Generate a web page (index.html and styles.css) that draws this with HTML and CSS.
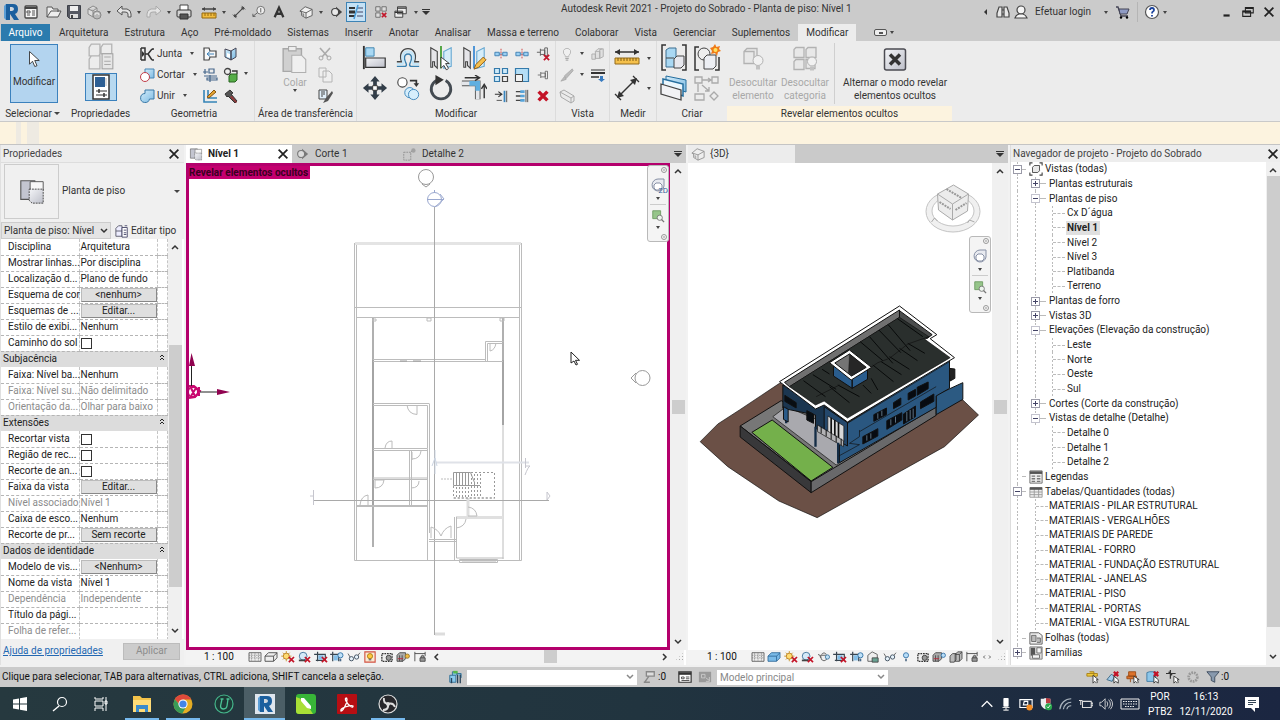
FILE: index.html
```html
<!DOCTYPE html>
<html lang="pt-BR">
<head>
<meta charset="utf-8">
<title>Autodesk Revit 2021 - Projeto do Sobrado</title>
<link rel="stylesheet" href="styles.css">
</head>
<body>
<svg class="defs" aria-hidden="true">
<defs>
<linearGradient id="gBlue" x1="0" y1="0" x2="1" y2="1"><stop offset="0" stop-color="#d3ecfa"/><stop offset="1" stop-color="#7dbbe3"/></linearGradient>
<linearGradient id="gGrey" x1="0" y1="0" x2="1" y2="1"><stop offset="0" stop-color="#f4f5f8"/><stop offset="1" stop-color="#bdbfc9"/></linearGradient>
</defs>
<symbol id="revit" viewBox="0 0 16 20"><path d="M3 2h7q5 0 5 5 0 4-3 5l4 6h-5l-4-6v6H3z" fill="#1b5f9e"/><path d="M7 5v4h2q2-.4 2-2T9 5z" fill="#cfd6de"/><path d="M3 2v16l-2-2V4z" fill="#5b9ed6"/></symbol>
<symbol id="home" viewBox="0 0 16 16"><rect x="2" y="2" width="12" height="12" rx="1" fill="#f5f5f5" stroke="#444" stroke-width="1.300"/><path d="M2 4h12" stroke="#444" stroke-width="2"/><path d="M4 7h3v2H4zM4 11h3M9 7h3M9 9h3M9 11h3" stroke="#555" fill="none"/></symbol>
<symbol id="open" viewBox="0 0 16 16"><path d="M1 13V3h5l1 2h5v3M1 13l4-6h10l-3 6z" fill="#eee" stroke="#555"/></symbol>
<symbol id="save" viewBox="0 0 16 16"><path d="M1.500 1.500h13v13h-11l-2-2z" fill="#555862" stroke="#3d4048"/><path d="M4 2h8v5H4z" fill="#eee"/><path d="M4 10h8v4H4z" fill="#ddd"/><path d="M6 11v3" stroke="#444" stroke-width="2"/></symbol>
<symbol id="cloud" viewBox="0 0 16 16"><path d="M2 5l5-3 4 2v6l-4 3-5-3zM2 5l5 2 4-3M7 7v6" fill="#ddd" stroke="#8b8b8b"/><circle cx="11" cy="11" r="4" fill="#b9b9b9" stroke="#888"/><path d="M9 11a2 2 0 0 1 4 0" fill="none" stroke="#eee"/></symbol>
<symbol id="undo" viewBox="0 0 16 16"><path d="M1 7l5-5v3h5q4 1 4 5v3h-3v-3q0-2-3-2H6v3z" fill="#e4e4e4" stroke="currentColor"/></symbol>
<symbol id="print" viewBox="0 0 16 16"><path d="M4 7V1h8v6" fill="#fff" stroke="#444"/><rect x="1" y="6" width="14" height="7" rx="1" fill="#d4d4d4" stroke="#333"/><path d="M4 10h8v5H4z" fill="#555" stroke="#333"/></symbol>
<symbol id="meas" viewBox="0 0 16 16"><path d="M1 5h14" stroke="#444" stroke-width="1.500"/><path d="M1 5l3-2v4zM15 5l-3-2v4z" fill="#444"/><path d="M1 9h14v5H1z" fill="#f2bd3f" stroke="#94690e"/><path d="M4 9v3M7 9v3M10 9v3M13 9v3" stroke="#94690e"/></symbol>
<symbol id="dim" viewBox="0 0 16 16"><path d="M3 13L13 3" stroke="#444" stroke-width="1.300"/><path d="M1 11l4 4M11 1l4 4" stroke="#444"/><path d="M2 14l1-4 3 3zM14 2l-1 4-3-3z" fill="#444"/></symbol>
<symbol id="tag" viewBox="0 0 16 16"><circle cx="10" cy="6" r="4.500" fill="#eee" stroke="#666"/><path d="M10 3.500v5M6 9l-5 4M1 10v3h3" fill="none" stroke="#555"/></symbol>
<symbol id="letra" viewBox="0 0 16 16"><path d="M3 14L8 3l5 11M5 10h6" fill="none" stroke="#333" stroke-width="2.600"/></symbol>
<symbol id="house" viewBox="0 0 16 16"><path d="M1 7l6-5 8 3v7l-7 3-5-3V8z" fill="#f0f0f0" stroke="#555"/><path d="M2 7l6 2 7-4M8 9v6" fill="none" stroke="#555"/><path d="M4 9l2 1v3l-2-1z" fill="#888"/></symbol>
<symbol id="sect" viewBox="0 0 16 16"><path d="M8 2l7 6-7 6z" fill="#444"/><circle cx="7" cy="8" r="4" fill="#e9e9e9" stroke="#444" stroke-width="1.300"/></symbol>
<symbol id="thin" viewBox="0 0 16 16"><path d="M1 4h6M1 12h6" stroke="#333" stroke-width="2"/><path d="M1 8h6" stroke="#333" stroke-width="3"/><path d="M9 4h6M9 8h6M9 12h6" stroke="#446"/><path d="M10 1L6 15" stroke="#479ad6" stroke-width="1.500"/></symbol>
<symbol id="closeh" viewBox="0 0 16 16"><path d="M2 2h5v5H2zM9 2h5v5H9zM2 9h5v5H2z" fill="#ddd" stroke="#666"/><path d="M9 9l5 5M14 9l-5 5" stroke="#c2172b" stroke-width="2"/></symbol>
<symbol id="sww" viewBox="0 0 16 16"><path d="M4 2h10v8H4zM1 7h9v7H1z" fill="#eee" stroke="#333"/><path d="M4 3.500h10M1 8.500h9" stroke="#333" stroke-width="1.500"/></symbol>
<symbol id="bino" viewBox="0 0 16 16"><path d="M2 13V9l2-6h3v10zM14 13V9l-2-6H9v10zM7 6h2v4H7z" fill="#e8e8e8" stroke="#444" stroke-width="1.200"/></symbol>
<symbol id="user" viewBox="0 0 16 16"><circle cx="8" cy="6" r="4" fill="#f5f5f5" stroke="#444" stroke-width="1.200"/><path d="M2 14q1-3 4-4h4q3 1 4 4z" fill="#f5f5f5" stroke="#444" stroke-width="1.200"/></symbol>
<symbol id="cart" viewBox="0 0 16 16"><path d="M1 3h2l3 9h7" fill="none" stroke="#445" stroke-width="1.300"/><path d="M4 5h10l-2 5H5z" fill="#8f9bc4" stroke="#445"/><circle cx="6" cy="13.500" r="1.200"/><circle cx="12" cy="13.500" r="1.200"/></symbol>
<symbol id="help" viewBox="0 0 16 16"><circle cx="8" cy="8" r="6.500" fill="#fff" stroke="#555" stroke-width="1.200"/><path d="M6 6q0-2 2-2t2 2q0 1-1 1.500-1 .5-1 2M8 11v1.500" fill="none" stroke="#1c449e" stroke-width="1.800"/></symbol>
<symbol id="x" viewBox="0 0 16 16"><path d="M3 3l10 10M13 3L3 13" stroke="currentColor" stroke-width="2"/></symbol>
<symbol id="min" viewBox="0 0 16 16"><path d="M4 12h7" stroke="#222" stroke-width="2.500"/></symbol>
<symbol id="rest" viewBox="0 0 16 16"><path d="M5 3h9v6H5zM2 7h9v6H2z" fill="#ccc" stroke="#222" stroke-width="1.200"/><path d="M5 3.500h9M2 7.500h9" stroke="#222" stroke-width="2"/></symbol>
<symbol id="cursor" viewBox="0 0 16 22"><path d="M2 1v17l4-4 3 7 3-1-3-7h6z" fill="#fff" stroke="#333" stroke-width="1.200"/></symbol>
<symbol id="types" viewBox="0 0 26 26"><path d="M2 4l2-3h8v9l-1 2H2zM13 4l2-3h8v9H13zM2 15l2-3h8v12H2z" fill="#ececec" stroke="#b4b4b4" stroke-width="1.200"/><rect x="14" y="10" width="10" height="14" fill="#e6e6e6" stroke="#a4a4a4"/><path d="M16 13h6M16 17h6M16 20h6" stroke="#aaa"/></symbol>
<symbol id="props" viewBox="0 0 24 26"><rect x="4" y="1" width="16" height="24" fill="#fff" stroke="#333" stroke-width="1.500"/><rect x="6" y="3" width="10" height="10" fill="#2d5f94"/><path d="M17 4v8" stroke="#bbb"/><path d="M7 17h11M7 21h11" stroke="#333"/><path d="M10 15v4M15 19v4" stroke="#333" stroke-width="1.500"/></symbol>
<symbol id="cope" viewBox="0 0 16 16"><path d="M2 2h4v12H2M2 2v12M6 8h3l4-5M9 8l4 6M13 3h2M13 14h2" fill="none" stroke="#333" stroke-width="1.500"/><path d="M3 5l2 2v2l-2 2z" fill="#333"/></symbol>
<symbol id="cut" viewBox="0 0 16 16"><path d="M6 2h9v9H6z" fill="url(#gBlue)" stroke="#4887b5"/><circle cx="6" cy="10" r="4.500" fill="#fff" stroke="#c03d49"/></symbol>
<symbol id="join" viewBox="0 0 16 16"><path d="M6 2h9v9h-4.500A4.500 4.500 0 1 1 6 5.500z" fill="url(#gBlue)" stroke="#3878a6"/></symbol>
<symbol id="g1" viewBox="0 0 16 16"><path d="M2 14V2h5l1 3 6 0v6H8l-1 3z" fill="#f8f8f8" stroke="#444" stroke-width="1.200"/><path d="M12 8H5M8 5.500L5 8l3 2.500" stroke="#3e82b9" fill="none"/></symbol>
<symbol id="g2" viewBox="0 0 16 16"><path d="M2 3l6 2v9l-6-3zM8 5l5-3v9l-5 3z" fill="url(#gBlue)" stroke="#445"/><path d="M4 7l3 1v4l-3-1z" fill="#fff"/></symbol>
<symbol id="g3" viewBox="0 0 16 16"><path d="M1 5h5M3 2v5M7 2h5v4H7zM2 9h13M5 11h10v2H5zM8 8v7" fill="none" stroke="#46678b" stroke-width="1.200"/></symbol>
<symbol id="g4" viewBox="0 0 16 16"><circle cx="4.500" cy="4.500" r="3" fill="#eee" stroke="#444" stroke-width="1.300"/><path d="M9 4h5v3" fill="none" stroke="#333" stroke-width="1.300"/><path d="M6 9l2-2h6v6l-2 2H6z" fill="#56ad48" stroke="#286421"/></symbol>
<symbol id="g5" viewBox="0 0 16 16"><path d="M2 2v12h13M6 2v8h9" fill="none" stroke="#3484b7" stroke-width="1.600"/><path d="M5 9l7-7 2 2-7 6z" fill="#e2a332" stroke="#875613"/></symbol>
<symbol id="hammer" viewBox="0 0 16 16"><path d="M2 6l5-4 3 3-2 1 6 7-2 2-7-7-1 1z" fill="#555" stroke="#333"/><path d="M9 8l5 6-1 1-6-6z" fill="#96393a"/></symbol>
<symbol id="paste" viewBox="0 0 26 28"><path d="M2 4h17v21H2z" fill="#d0d0d0" stroke="#a8a8a8" stroke-width="1.300"/><path d="M7 2h7v4H7z" fill="#eee" stroke="#a8a8a8"/><path d="M10 10h9l4 4v12H10z" fill="#f0f0f0" stroke="#b0b0b0"/></symbol>
<symbol id="sciss" viewBox="0 0 16 16"><path d="M3 2l8 9M13 2L5 11" stroke="#aaa" stroke-width="1.600"/><circle cx="4" cy="12" r="2" fill="none" stroke="#aaa"/><circle cx="12" cy="12" r="2" fill="none" stroke="#aaa"/></symbol>
<symbol id="copyc" viewBox="0 0 16 16"><path d="M2 1h7v9H2zM6 4h6l3 3v8H6z" fill="#efefef" stroke="#b4b4b4"/></symbol>
<symbol id="brush" viewBox="0 0 16 16"><path d="M2 2h8v9H2z" fill="#e2f0fa" stroke="#444"/><path d="M4 4h4M4 6h4M4 8h2" stroke="#444"/><path d="M15 3l-6 7-3 5 5-2 5-8z" fill="#555"/></symbol>
<symbol id="align" viewBox="0 0 28 28"><path d="M2 1v25" stroke="#333" stroke-width="2"/><path d="M4 3h9v9H4z" fill="#a9d8f3" stroke="#3b83ae"/><path d="M4 14h21v10H4z" fill="url(#gGrey)" stroke="#333" stroke-width="1.300"/></symbol>
<symbol id="offset" viewBox="0 0 28 28"><path d="M2 23h9q2-1 1-3-3-6-1-9a4 4 0 0 1 6 0q2 3-1 9-1 2 1 3h9" fill="none" stroke="#3a81b0" stroke-width="1.500"/><path d="M2 18h5q-2-6 0-10a8 8 0 0 1 14 0q2 4 0 10h5" fill="none" stroke="#444" stroke-width="1.500"/><path d="M2 20.500h6q1-1 1-2-2-6 0-9a6 6 0 0 1 10 0q2 3 0 9 0 1 1 2h6" fill="none" stroke="#c5e6f8" stroke-width="2.500"/></symbol>
<symbol id="mir1" viewBox="0 0 28 28"><path d="M3 3l7 4v18l-3-3v-4H5v6H3z" fill="#e5e5e9" stroke="#444" stroke-width="1.200"/><path d="M25 3l-8 4v18l8-2z" fill="#d6edf9" stroke="#68a9d2" stroke-width="1.200"/><path d="M14 1v24" stroke="#4ba13b" stroke-width="2"/><path d="M14 13v12l3-3 3 5 2-2-3-5h4z" fill="#fff" stroke="#333"/></symbol>
<symbol id="mir2" viewBox="0 0 28 28"><path d="M3 3l7 4v18l-3-3v-4H5v6H3z" fill="#e5e5e9" stroke="#444" stroke-width="1.200"/><path d="M25 3l-8 4v18l8-2z" fill="#d6edf9" stroke="#68a9d2" stroke-width="1.200"/><path d="M14 1v24" stroke="#448fd5" stroke-width="2"/><path d="M14 26l2-5 8-8 3 3-8 8z" fill="#f5bf4c" stroke="#8a5715"/></symbol>
<symbol id="move" viewBox="0 0 28 28"><path d="M14 1l5 6h-3v5h-4V7H9zM14 27l5-6h-3v-5h-4v5H9zM1 14l6-5v3h5v4H7v3zM27 14l-6-5v3h-5v4h5v3z" fill="#333e49"/><path d="M11.500 11.500h5v5h-5z" fill="#fff" stroke="#333"/></symbol>
<symbol id="copy" viewBox="0 0 28 28"><circle cx="8" cy="8" r="5" fill="#fff" stroke="#444" stroke-width="1.200"/><path d="M16 6h7v4" fill="none" stroke="#333" stroke-width="1.800"/><path d="M20 9h6l-3 4z" fill="#333"/><circle cx="16" cy="19" r="5.500" fill="#d6eefc" stroke="#3c86bb"/><circle cx="20" cy="21" r="5.500" fill="#d6eefc" stroke="#3c86bb"/></symbol>
<symbol id="rotate" viewBox="0 0 28 28"><path d="M9 6a10.500 10.500 0 1 0 10 0" fill="none" stroke="#444b52" stroke-width="3"/><path d="M8 0l9 5-9 6z" fill="#333"/></symbol>
<symbol id="trim" viewBox="0 0 28 28"><path d="M1 9h17v17" fill="none" stroke="#555" stroke-width="6"/><path d="M1 9h17v17" fill="none" stroke="#e4e6ea" stroke-width="4"/><path d="M9 9h9v8" fill="none" stroke="#60afe0" stroke-width="5"/><path d="M4 3h15M15 0l5 3-5 3M25 25V12M22 15l3-5 3 5" fill="none" stroke="#333" stroke-width="1.500"/></symbol>
<symbol id="split" viewBox="0 0 16 16"><path d="M1 6h5v4H1zM10 6h5v4h-5z" fill="#9bd0f2" stroke="#3a7cb0"/><path d="M6 8h4" stroke="#3a7cb0"/><path d="M8 2v12" stroke="#c33" stroke-dasharray="2 1"/></symbol>
<symbol id="array" viewBox="0 0 16 16"><path d="M1.500 1.500h5v5h-5zM9.500 1.500h5v5h-5zM1.500 9.500h5v5h-5z" fill="#cdeafa" stroke="#347aab" stroke-width="1.200"/><path d="M9.500 9.500h5v5h-5z" fill="#eee" stroke="#444" stroke-width="1.200"/></symbol>
<symbol id="scale" viewBox="0 0 16 16"><path d="M1.500 1.500h13v13h-13z" fill="#b4def6" stroke="#347aab" stroke-width="1.200"/><path d="M1.500 7.500h7v7h-7z" fill="#f2f2f2" stroke="#444"/></symbol>
<symbol id="pin" viewBox="0 0 16 16"><path d="M1 8h4M5 4v8M5 5.500h6v5H5M11 3v10h3V3z" fill="#eee" stroke="#555"/></symbol>
<symbol id="unpin" viewBox="0 0 16 16"><path d="M1 6h4M5 2v8M5 3.500h5v5H5M10 1v9h3V1z" fill="#eee" stroke="#555"/><path d="M9 9l6 6M15 9l-6 6" stroke="#c2172b" stroke-width="2"/></symbol>
<symbol id="ext" viewBox="0 0 16 16"><path d="M1 6h7M5 3l4 3-4 3" fill="none" stroke="#333" stroke-width="1.300"/><path d="M12 2v13" stroke="#3884bd" stroke-width="2"/><path d="M14.500 2v13M3 13h6" stroke="#444"/></symbol>
<symbol id="ext2" viewBox="0 0 16 16"><path d="M1 3h7M1 8h8M1 13h8" stroke="#444" stroke-width="1.500"/><path d="M6 3h5M6 8h5M6 13h5" stroke="#57a4da" stroke-width="3"/><path d="M12.500 1v14M14.500 1v14" stroke="#444"/></symbol>
<symbol id="del" viewBox="0 0 16 16"><path d="M3 3l10 10M13 3L3 13" stroke="#c41327" stroke-width="4"/></symbol>
<symbol id="bulbg" viewBox="0 0 16 16"><path d="M6 10q-3-3-2-6a4.500 4.500 0 0 1 8 0q1 3-2 6v1H6z" fill="#f0f0f0" stroke="#b4b4b4"/><path d="M6 13h4M6.500 15h3" stroke="#aaa" stroke-width="1.500"/></symbol>
<symbol id="blocksg" viewBox="0 0 16 16"><path d="M1 8h4v6H1zM5 5h5v8H5zM10 3l4-1v9l-4 2zM5 5l3-3h5" fill="#e0e0e0" stroke="#aaa"/></symbol>
<symbol id="brushg" viewBox="0 0 16 16"><path d="M14 1L5 9l2 3 8-9zM5 10l-4 5 6-2z" fill="#bbb" stroke="#aaa"/></symbol>
<symbol id="lines" viewBox="0 0 16 16"><path d="M1 3h14" stroke="#333"/><path d="M1 6h14" stroke="#333" stroke-width="2"/><path d="M1 10h8" stroke="#333" stroke-width="1.500"/><path d="M10 9h3v3h2l-3.500 3L8 12h2z" fill="#3a7cc0"/></symbol>
<symbol id="boxg" viewBox="0 0 16 16"><path d="M1 4l4-2 10 6v5l-3 2L2 9zM1 4l11 6 3-2M12 10v5" fill="#eaeaea" stroke="#aaa"/></symbol>
<symbol id="measure" viewBox="0 0 28 28"><path d="M2 8h24" stroke="#333" stroke-width="1.500"/><path d="M2 8l5-3v6zM26 8l-5-3v6z" fill="#333"/><path d="M2 14h24v6H2z" fill="#f5c04b" stroke="#926a1c"/><path d="M5 14v3M8 14v3M11 14v3M14 14v3M17 14v3M20 14v3M23 14v3" stroke="#805c12"/></symbol>
<symbol id="dimb" viewBox="0 0 28 28"><path d="M5 23L23 5" stroke="#333" stroke-width="1.500"/><path d="M2 20l6 6M20 2l6 6" stroke="#333" stroke-width="1.300"/><path d="M4 24l2-7 5 5zM24 4l-2 7-5-5z" fill="#333"/></symbol>
<symbol id="cr1" viewBox="0 0 28 28"><path d="M6 1H2v25h4M22 1h4v25h-4" fill="none" stroke="#333" stroke-width="1.500"/><path d="M6 6l3-2h7v9l-1 10H6z" fill="#a9d8f3" stroke="#3c6f91"/><path d="M14 15l3-3h7v9l-3 3h-7zM6 14h8" fill="#e7e8ee" stroke="#444"/></symbol>
<symbol id="cr2" viewBox="0 0 28 28"><path d="M6 3H2v23h4M22 26h4V13" fill="none" stroke="#333" stroke-width="1.500"/><circle cx="11" cy="10" r="6" fill="#eee" stroke="#444"/><path d="M11 14l3-3h9v11l-3 3h-9z" fill="#eceef3" stroke="#444"/><path d="M22 0l1.500 3L27 2l-1 3 2 2-3 1-1 4-2-3-4 1 1-3-2-3 3-1z" fill="#ef7b18"/><circle cx="22.500" cy="6" r="2" fill="#ffe35c"/></symbol>
<symbol id="cr3" viewBox="0 0 28 28"><path d="M6 2l20 4v12l-20-6z" fill="url(#gBlue)" stroke="#246e9e"/><path d="M3 5l20 5v12L3 15z" fill="#eaf6fd" stroke="#246e9e" stroke-width="1.500"/><path d="M1 10l20 6v10L1 20z" fill="#f1f2f5" stroke="#444" stroke-width="1.300"/></symbol>
<symbol id="cr4" viewBox="0 0 28 28"><path d="M2 3h7v6H2zM19 3h6v6h-6zM2 20h9v6H2zM17 22l4-4 4 4-4 4zM9 6h8M15 4l3 2-3 2M5 10v8M9 11l7 6M16 13v4h-4" fill="none" stroke="#aaa" stroke-width="1.300"/></symbol>
<symbol id="un1" viewBox="0 0 28 28"><path d="M5 6l3-3h10v12l-3 3H5zM5 6h10v12" fill="#e8e8e8" stroke="#b2b2b2" stroke-width="1.300"/><circle cx="19" cy="15" r="5" fill="#f1f1f1" stroke="#b2b2b2"/><path d="M17 20h4v4h-4z" fill="#c2c2c2"/></symbol>
<symbol id="un2" viewBox="0 0 28 28"><path d="M3 4l2-2h8v10H3zM15 4l2-2h8v10H15zM3 16l2-2h8v10H3zM15 14h9v9h-9z" fill="#e8e8e8" stroke="#b2b2b2" stroke-width="1.300"/><circle cx="21" cy="16" r="4.500" fill="#f1f1f1" stroke="#b2b2b2"/><path d="M19 21h4v4h-4z" fill="#c2c2c2"/></symbol>
<symbol id="bigx" viewBox="0 0 28 28"><rect x="3.500" y="3.500" width="21" height="21" rx="2" fill="url(#gGrey)" stroke="#4b4b52" stroke-width="1.500"/><path d="M9 9l10 10M19 9L9 19" stroke="#333" stroke-width="3.500"/></symbol>
<symbol id="plan" viewBox="0 0 30 30"><path d="M3 4h15v22l-3-2H3z" fill="#c3c5d0" stroke="#555" stroke-width="1.200"/><path d="M13 13v-8h14v9" fill="#f7f7f7" stroke="#555"/><path d="M12 13h15v15H15l-3-3z" fill="url(#gGrey)" stroke="#444" stroke-dasharray="2 1"/></symbol>
<symbol id="callout" viewBox="0 0 16 16"><path d="M2 6h8v9H2z" fill="none" stroke="#666" stroke-dasharray="2 1"/><path d="M10 6l3-3" stroke="#666"/><circle cx="13" cy="4" r="2.500" fill="#888"/></symbol>
<symbol id="edt" viewBox="0 0 16 16"><path d="M1 5l3-3h4v12H1zM1 8h7" fill="#eef" stroke="#556"/><path d="M8 4h6v11H8zM10 7h3M10 10h3M10 12h3M11 2h3" fill="#fff" stroke="#446"/></symbol>
<symbol id="v1" viewBox="0 0 16 14"><path d="M1 2h14v10H1z" fill="#eee" stroke="#555"/><path d="M1 5h14M1 8h14M4 2v10M8 2v10M12 2v10" stroke="#777" stroke-dasharray="1 1"/></symbol>
<symbol id="v2" viewBox="0 0 16 14"><path d="M1 6l4-4h10v6l-4 4H1zM1 6h10v6M11 6l4-4" fill="#eee" stroke="#444"/></symbol>
<symbol id="v2b" viewBox="0 0 16 14"><path d="M1 6l4-4h10v6l-4 4H1zM1 6h10v6M11 6l4-4" fill="#7abbe8" stroke="#2e6898"/></symbol>
<symbol id="sun" viewBox="0 0 16 14"><path d="M6 0v12M0 6h12M2 2l8 8M10 2l-8 8" stroke="#c79224"/><circle cx="6" cy="6" r="3.500" fill="#ffdc72" stroke="#b77b1c"/><path d="M9 7l6 6M15 7l-6 6" stroke="#c41327" stroke-width="2"/></symbol>
<symbol id="shadow" viewBox="0 0 16 14"><circle cx="7" cy="6" r="4.500" fill="#d5eaf8" stroke="#3b6d94"/><path d="M2 11h8" stroke="#444" stroke-width="2"/><path d="M9 7l6 6M15 7l-6 6" stroke="#c41327" stroke-width="2"/></symbol>
<symbol id="crop" viewBox="0 0 16 14"><path d="M4 1v11M0 4h13v8M2 11h9" fill="none" stroke="#38444f" stroke-width="1.400"/><path d="M5 5h6v5H5z" fill="#82bee8"/><path d="M9 7l6 6M15 7l-6 6" stroke="#c41327" stroke-width="2"/></symbol>
<symbol id="crop2" viewBox="0 0 16 14"><path d="M3 1v11M0 4h10v8" fill="none" stroke="#38444f" stroke-width="1.400"/><path d="M4 5h5v6H4z" fill="#82bee8"/><circle cx="12" cy="5" r="3" fill="#bfe1f8" stroke="#286ca1"/><path d="M11 9h2v3h-2z" fill="#49698a"/></symbol>
<symbol id="glasses" viewBox="0 0 16 14"><path d="M1 3l3 5M15 2l-4 5" stroke="#555"/><circle cx="5" cy="9" r="2.500" fill="#e6f2fa" stroke="#345"/><circle cx="11" cy="7" r="2.500" fill="#e6f2fa" stroke="#345"/></symbol>
<symbol id="reveal" viewBox="0 0 16 14"><path d="M2 1h12v12H2z" fill="#fbe9d2" stroke="#d15243" stroke-width="1.300"/><circle cx="8" cy="6" r="3" fill="#ffc83d" stroke="#a67612"/><path d="M6.500 9h3v2h-3z" fill="#777"/></symbol>
<symbol id="temp" viewBox="0 0 16 14"><path d="M2 3h12v9H2z" fill="#eee" stroke="#333" stroke-width="1.500" stroke-dasharray="2 1"/><circle cx="10" cy="8" r="3" fill="#999" stroke="#333"/></symbol>
<symbol id="anal" viewBox="0 0 16 14"><path d="M1 5l3-3h7v7l-3 3H1zM4 5v7M7 5v7" fill="#aaa" stroke="#444"/><path d="M2 9h6" stroke="#b23"/><circle cx="13" cy="6" r="2.500" fill="#f0b941" stroke="#92742a"/></symbol>
<symbol id="anal2" viewBox="0 0 16 14"><path d="M1 5l3-3h7v7l-3 3H1zM4 5v7M7 5v7" fill="#aaa" stroke="#444"/><path d="M2 9h6" stroke="#b23"/><circle cx="13" cy="5" r="2.500" fill="#b8ddf7" stroke="#2f6ea5"/></symbol>
<symbol id="cubes" viewBox="0 0 16 14"><path d="M1 6l3-3h4v7l-2 3H1zM7 4l3-3h5v8l-3 3H7z" fill="#bbb" stroke="#444"/><path d="M7 4h5v8M12 4l3-3" fill="none" stroke="#444"/></symbol>
<symbol id="constr" viewBox="0 0 16 14"><path d="M2 1v11M14 1v5M2 3h12" stroke="#444" fill="none"/><path d="M8 8h6v4H8zM9 8q0-3 2-3t2 3" fill="#999" stroke="#444"/></symbol>
<symbol id="teapot" viewBox="0 0 16 14"><path d="M1 4q3 0 3 4M4 5h7v5q-3 3-6 0zM5 4l3-2 3 2" fill="#eee" stroke="#555"/><circle cx="12" cy="7" r="2.500" fill="#bcdff5" stroke="#4479a0"/></symbol>
<symbol id="lock" viewBox="0 0 16 14"><path d="M2 12V5l5-4 6 3v8z" fill="#eee" stroke="#555"/><path d="M7 8h7v5H7z" fill="#69a293" stroke="#444"/></symbol>
<symbol id="bulb" viewBox="0 0 16 14"><circle cx="8" cy="5" r="3" fill="#b8ddf7" stroke="#2f6ea5"/><path d="M7 9h2v3H7z" fill="#566f88"/></symbol>
<symbol id="frame" viewBox="0 0 16 16"><path d="M1 4V1h3M12 1h3v3M15 12v3h-3M4 15H1v-3" fill="none" stroke="#444" stroke-width="1.300"/><path d="M4 6l2-2h6v6l-2 2H4z" fill="#e8e8e8" stroke="#444"/></symbol>
<symbol id="leg" viewBox="0 0 16 16"><path d="M1 1h14v14H1z" fill="#eee" stroke="#666"/><path d="M1 3h14" stroke="#555" stroke-width="3"/><path d="M3 7h4M9 7h4M3 10h4M9 10h4M3 13h4M9 13h4" stroke="#777" stroke-width="1.500"/></symbol>
<symbol id="tab" viewBox="0 0 16 16"><path d="M1 3h14v11H1zM1 8h14M1 11h14M6 4v10M11 4v10" fill="#eee" stroke="#999"/><path d="M1 4h14" stroke="#555" stroke-width="3"/></symbol>
<symbol id="sheet" viewBox="0 0 16 16"><path d="M1 2h10l4 3v10H1z" fill="#eee" stroke="#555"/><path d="M3 5h5v7H3zM9 8h4v5H9" fill="#bbb" stroke="#666"/></symbol>
<symbol id="fam" viewBox="0 0 16 16"><path d="M1 1h14v14H1z" fill="#ddd" stroke="#777"/><path d="M2 2h5v9H2z" fill="#555"/><path d="M9 2h5v6H9zM4 10h8v4H4z" fill="#f6f6f6" stroke="#666"/></symbol>
<symbol id="wheel" viewBox="0 0 16 16"><path d="M8 1h6v7a6 6 0 1 1-6-7z" fill="#e8eaf0" stroke="#8790a5"/><path d="M6 5h4l2 2v3l-2 2H6L4 10V7z" fill="#fff" stroke="#8790a5"/></symbol>
<symbol id="zoomr" viewBox="0 0 16 16"><path d="M2 2h9v9H2z" fill="#96c58a" stroke="#6b9a61"/><circle cx="10" cy="10" r="3" fill="#eef5ee" stroke="#777"/><path d="M12 12l3 3" stroke="#777" stroke-width="1.500"/></symbol>
<symbol id="s1" viewBox="0 0 16 16"><path d="M2 6h7v8H2zM5 6V2h5v4M10 4h5v5" fill="#8ac9ec" stroke="#2d6b91"/><path d="M6 1h5v3H6z" fill="#55b74a"/><path d="M11 5v10M14 5v10M4 9v6" stroke="#29435a" stroke-width="1.500"/></symbol>
<symbol id="s2" viewBox="0 0 16 16"><path d="M5 2h9v5H5zM8 7l-5 7M2 14h7" fill="#ddd" stroke="#888" stroke-width="1.500"/></symbol>
<symbol id="s3" viewBox="0 0 16 16"><path d="M1 2h14v12H1z" fill="#fff" stroke="#333" stroke-width="1.400"/><path d="M1 4h14" stroke="#333" stroke-width="3"/><path d="M4 8h3v2H4zM9 8h4M9 10h4M4 12h9" stroke="#444" fill="none"/></symbol>
<symbol id="s4" viewBox="0 0 16 16"><path d="M1 2h14v12H1z" fill="#999"/><path d="M4 5h4v4H4zM9 9l4 3M13 8v5H9" stroke="#ccc" fill="none"/></symbol>
<symbol id="k1" viewBox="0 0 16 16"><path d="M1 4h12v3H1zM4 2h5v8" fill="#edc83c" stroke="#a67e14"/><path d="M8 6v9l2-2 2 2 1-1-1-3h2z" fill="#fff" stroke="#333"/></symbol>
<symbol id="k2" viewBox="0 0 16 16"><path d="M1 11l5-6 4 2-3 6z" fill="#a2cbe8" stroke="#376582"/><path d="M9 2l5 5M14 2L9 7" stroke="#c41327" stroke-width="2.500"/><path d="M9 7v8l2-2 3 2v-4z" fill="#fff" stroke="#333"/></symbol>
<symbol id="k3" viewBox="0 0 16 16"><path d="M3 2h8v5H3zM1 7h11v3H1zM5 10v4" fill="#dc722b" stroke="#9a4915"/><path d="M9 7v8l2-2 2 2 1-1-1-3h2z" fill="#fff" stroke="#333"/></symbol>
<symbol id="k4" viewBox="0 0 16 16"><path d="M1 3l3-1h7v11H1z" fill="#8cc6ea" stroke="#3b77a0"/><path d="M9 2l5 5M14 2L9 7" stroke="#c41327" stroke-width="2.500"/><path d="M9 7v8l2-2 3 2v-4z" fill="#fff" stroke="#333"/></symbol>
<symbol id="k5" viewBox="0 0 16 16"><path d="M5 0v10M0 4h11M3 2l4 4" stroke="#333" stroke-width="1.400"/><path d="M9 7v8l2-2 2 2 1-1-1-3h2z" fill="#fff" stroke="#333"/></symbol>
<symbol id="k6" viewBox="0 0 16 16"><circle cx="8" cy="8" r="5" fill="none" stroke="#999" stroke-width="3" stroke-dasharray="2 1"/></symbol>
<symbol id="k7" viewBox="0 0 16 16"><path d="M1 2h14L10 8v6l-4-2V8z" fill="#8899ad" stroke="#39485a"/></symbol>
<symbol id="win" viewBox="0 0 16 16"><path d="M1 3.500L7 2.500v5H1zM8 2.300L15 1v6.500H8zM1 8.500h6v5l-6-1zM8 8.500h7V15l-7-1.300z" fill="#fff"/></symbol>
<symbol id="search" viewBox="0 0 16 16"><circle cx="10" cy="6" r="4.500" fill="none" stroke="#fff" stroke-width="1.200"/><path d="M7 10l-6 5" stroke="#fff" stroke-width="1.400"/></symbol>
<symbol id="taskv" viewBox="0 0 16 16"><path d="M2 1v2h8V1M2 15v-3h8v3M2 5h8v5H2zM13 1v14M12 5h2v3h-2z" fill="none" stroke="#fff"/></symbol>
<symbol id="files" viewBox="0 0 20 20"><path d="M1 2h7l2 2h9v14H1z" fill="#f3c34a"/><path d="M1 6h18v12H1z" fill="#ffdc78"/><path d="M4 11h12v7h-3v-3H7v3H4z" fill="#3b8bcc"/></symbol>
<symbol id="chrome" viewBox="0 0 20 20"><circle cx="10" cy="10" r="9.500" fill="#e4ad24"/><path d="M1.800 5.200A9.500 9.500 0 0 1 18.300 5.500H10L7 11z" fill="#df493b"/><path d="M1.800 5.200A9.500 9.500 0 0 0 9.300 19.500l4-7H8z" fill="#399a57"/><circle cx="10" cy="10" r="4.600" fill="#fff"/><circle cx="10" cy="10" r="3.600" fill="#4285e8"/></symbol>
<symbol id="uni" viewBox="0 0 20 20"><circle cx="10" cy="10" r="9" fill="#1d3a37" stroke="#45b68b" stroke-width="1.200"/><path d="M8 5l-1.500 7q0 3 3 3t3.500-3L14 5M6.500 5h3M12.500 5h3" fill="none" stroke="#4bc294" stroke-width="1.300"/></symbol>
<symbol id="corel" viewBox="0 0 20 20"><rect x="0" y="0" width="20" height="20" rx="3" fill="#38b538"/><path d="M0 3q8 1 17 17H3q-3 0-3-3z" fill="#a8df36"/><path d="M5 4l3 0 7 8v3l-4-1-6-7z" fill="#fff"/></symbol>
<symbol id="acro" viewBox="0 0 20 20"><rect width="20" height="20" rx="1" fill="#b70e13"/><path d="M9 4q2 0 0 6-3 7-5 7-1-2 4-4 7-2 8-1 0 3-5-2-4-5-2-6z" fill="none" stroke="#fff" stroke-width="1.300"/></symbol>
<symbol id="obs" viewBox="0 0 20 20"><circle cx="10" cy="10" r="9" fill="#27272b" stroke="#ddd" stroke-width="1.200"/><path d="M10 10q-5-1-4-6M10 10q5-2 7 3M10 10q1 6-5 6" fill="none" stroke="#ddd" stroke-width="2"/><circle cx="10" cy="10" r="2" fill="#ddd"/></symbol>
<symbol id="mic" viewBox="0 0 16 16"><rect x="5" y="1" width="6" height="10" rx="1" fill="#fff"/><path d="M4 12h8M8 12v3M5 15h6" stroke="#ddd" stroke-width="1.300"/></symbol>
<symbol id="tr1" viewBox="0 0 16 16"><path d="M1 3h14v9H1zM6 5h4v4H5z" fill="none" stroke="#fff" stroke-width="1.300"/><circle cx="12" cy="12" r="3.500" fill="#f58d23"/></symbol>
<symbol id="shield" viewBox="0 0 16 16"><path d="M2 2q4 0 5-1 2 1 6 1v5q0 5-6 7-5-3-5-7z" fill="#eee"/><path d="M8 1v6h5V2z" fill="#bb3c42"/><circle cx="11" cy="11" r="4" fill="#2ba84e"/><path d="M9 11l1.500 1.500L13 9" fill="none" stroke="#fff"/></symbol>
<symbol id="wifi" viewBox="0 0 16 16"><path d="M1 14A13 13 0 0 1 14 2M5 14a9 9 0 0 1 9-8M9 14a5 5 0 0 1 5-4" fill="none" stroke="#aab4be" stroke-width="1.400"/></symbol>
<symbol id="batt" viewBox="0 0 16 16"><path d="M4 5h10v7H4zM14 7h2v3h-2M0 4h4M2 4v5" fill="none" stroke="#ddd" stroke-width="1.200"/></symbol>
<symbol id="vol" viewBox="0 0 16 16"><path d="M1 6h2l4-4v12l-4-4H1zM9 5q2 3 0 6M11 3q4 5 0 10M13 2q5 6 0 12" fill="none" stroke="#ddd"/></symbol>
<symbol id="kbd" viewBox="0 0 20 16"><path d="M1 3h18v10H1z" fill="none" stroke="#eee"/><path d="M3 5.500h14M3 8h14M5 10.500h10" stroke="#eee" stroke-dasharray="1.500 1"/></symbol>
<symbol id="note" viewBox="0 0 16 16"><path d="M1 1h14v11h-4v4l-4-4H1z" fill="#fff"/><path d="M4 4.500h8M4 6.500h8M4 8.500h5" stroke="#345"/></symbol>
<symbol id="up" viewBox="0 0 12 12"><path d="M3 8l3-3 3 3" fill="none" stroke="currentColor" stroke-width="1.500"/></symbol>
<symbol id="down" viewBox="0 0 12 12"><path d="M3 4l3 3 3-3" fill="none" stroke="currentColor" stroke-width="1.500"/></symbol>
<symbol id="left" viewBox="0 0 12 12"><path d="M8 3L5 6l3 3" fill="none" stroke="currentColor" stroke-width="1.500"/></symbol>
<symbol id="right" viewBox="0 0 12 12"><path d="M4 3l3 3-3 3" fill="none" stroke="currentColor" stroke-width="1.500"/></symbol>
<symbol id="trayup" viewBox="0 0 12 12"><path d="M2 8l4-4 4 4" fill="none" stroke="currentColor"/></symbol>
<symbol id="dbl" viewBox="0 0 12 12"><path d="M4 5l2-2 2 2M4 8l2-2 2 2" fill="none" stroke="#222"/></symbol>
<symbol id="ring" viewBox="0 0 8 8"><circle cx="4" cy="4" r="2.500" fill="none" stroke="#999"/><path d="M3 4h2" stroke="#999"/></symbol>
</svg>

<header class="titlebar">
  <div class="qat">
    <button aria-label="Revit"><svg class="i20"><use href="#revit"/></svg></button>
    <button aria-label="Início"><svg class="i16"><use href="#home"/></svg></button>
    <i class="gap3"></i>
    <button aria-label="Abrir"><svg class="i16"><use href="#open"/></svg></button>
    <button aria-label="Salvar"><svg class="i16"><use href="#save"/></svg></button>
    <button aria-label="Sincronizar"><svg class="i16"><use href="#cloud"/></svg></button>
    <i class="car"></i>
    <button aria-label="Desfazer"><svg class="i16 dk"><use href="#undo"/></svg></button>
    <i class="car"></i>
    <button aria-label="Refazer"><svg class="i16 flip"><use href="#undo"/></svg></button>
    <i class="car"></i>
    <button aria-label="Imprimir"><svg class="i16"><use href="#print"/></svg></button>
    <i class="gap5"></i>
    <button aria-label="Medir"><svg class="i16"><use href="#meas"/></svg></button>
    <i class="car"></i>
    <button aria-label="Cota"><svg class="i14"><use href="#dim"/></svg></button>
    <button aria-label="Identificador"><svg class="i14"><use href="#tag"/></svg></button>
    <button aria-label="Texto"><svg class="i14"><use href="#letra"/></svg></button>
    <i class="gap7"></i>
    <button aria-label="Vista 3D"><svg class="i14"><use href="#house"/></svg></button>
    <i class="car"></i>
    <button aria-label="Corte"><svg class="i14"><use href="#sect"/></svg></button>
    <button class="on" aria-label="Linhas finas"><svg class="i16"><use href="#thin"/></svg></button>
    <i class="gap5"></i>
    <button aria-label="Fechar ocultas"><svg class="i14"><use href="#closeh"/></svg></button>
    <button aria-label="Alternar janelas"><svg class="i14"><use href="#sww"/></svg></button>
    <i class="car"></i>
    <i class="car bar"></i>
  </div>
  <h1>Autodesk Revit 2021 - Projeto do Sobrado - Planta de piso: Nível 1</h1>
  <div class="account">
    <i class="carl"></i>
    <button aria-label="Pesquisar"><svg class="i16"><use href="#bino"/></svg></button>
    <button class="login"><svg class="i16"><use href="#user"/></svg>Efetuar login</button>
    <i class="car"></i>
    <button class="shop" aria-label="Loja"><svg class="i16"><use href="#cart"/></svg></button>
    <button class="helpb" aria-label="Ajuda"><svg class="i16"><use href="#help"/></svg></button>
    <i class="car"></i>
  </div>
  <div class="winbtns">
    <button aria-label="Minimizar"><svg class="i14"><use href="#min"/></svg></button>
    <button aria-label="Restaurar"><svg class="i14"><use href="#rest"/></svg></button>
    <button aria-label="Fechar"><svg class="i14"><use href="#x"/></svg></button>
  </div>
</header>

<nav class="tabs">
  <button class="file">Arquivo</button><button>Arquitetura</button><button>Estrutura</button><button>Aço</button><button>Pré-moldado</button><button>Sistemas</button><button>Inserir</button><button>Anotar</button><button>Analisar</button><button>Massa e terreno</button><button>Colaborar</button><button>Vista</button><button>Gerenciar</button><button>Suplementos</button><button class="sel">Modificar</button>
  <button class="mini" aria-label="Minimizar faixa"><span></span><i class="car"></i></button>
</nav>

<div class="ribbon">
  <section class="panel p-sel">
    <div class="tools"><button class="mod"><svg class="cur"><use href="#cursor"/></svg>Modificar</button></div>
    <h2>Selecionar <i class="car dk"></i></h2>
  </section>
  <section class="panel p-prop">
    <div class="tools"><button aria-label="Propriedades de tipo"><svg class="i28"><use href="#types"/></svg></button><button class="on" aria-label="Propriedades"><svg class="i26"><use href="#props"/></svg></button></div>
    <h2>Propriedades</h2>
  </section>
  <section class="panel p-geo">
    <div class="tools">
      <div class="rows"><button><svg class="i16"><use href="#cope"/></svg>Junta<i class="car"></i></button><button><svg class="i16"><use href="#cut"/></svg>Cortar<i class="car"></i></button><button><svg class="i16"><use href="#join"/></svg>Unir<i class="car"></i></button></div>
      <div class="sm2"><button aria-label="Telhado"><svg class="i16"><use href="#g1"/></svg></button><button aria-label="Face"><svg class="i16"><use href="#g2"/></svg></button><button aria-label="Viga"><svg class="i16"><use href="#g3"/></svg></button><button aria-label="Pintar"><svg class="i16"><use href="#g4"/></svg></button><button aria-label="Parede"><svg class="i16"><use href="#g5"/></svg></button><button aria-label="Demolir"><svg class="i16"><use href="#hammer"/></svg></button></div>
      <i class="car"></i>
    </div>
    <h2>Geometria</h2>
  </section>
  <section class="panel p-clip sepr sepl">
    <div class="tools">
      <button class="big off"><svg class="i28"><use href="#paste"/></svg>Colar<i class="car"></i></button>
      <div class="sm1"><button aria-label="Recortar"><svg class="i16"><use href="#sciss"/></svg></button><button aria-label="Copiar"><svg class="i16"><use href="#copyc"/></svg></button><button aria-label="Igualar tipo"><svg class="i16"><use href="#brush"/></svg></button></div>
    </div>
    <h2>Área de transferência</h2>
  </section>
  <section class="panel p-mod sepr">
    <div class="tools">
      <div class="bg4"><button aria-label="Alinhar"><svg class="i26"><use href="#align"/></svg></button><button aria-label="Deslocamento"><svg class="i26"><use href="#offset"/></svg></button><button aria-label="Espelhar eixo"><svg class="i26"><use href="#mir1"/></svg></button><button aria-label="Espelhar desenho"><svg class="i26"><use href="#mir2"/></svg></button><button aria-label="Mover"><svg class="i26"><use href="#move"/></svg></button><button aria-label="Copiar elemento"><svg class="i26"><use href="#copy"/></svg></button><button aria-label="Rotacionar"><svg class="i26"><use href="#rotate"/></svg></button><button aria-label="Aparar"><svg class="i26"><use href="#trim"/></svg></button></div>
      <div class="sm3"><button aria-label="Dividir"><svg class="i14"><use href="#split"/></svg></button><button aria-label="Dividir com folga"><svg class="i14"><use href="#split"/></svg></button><button aria-label="Desafixar"><svg class="i14"><use href="#unpin"/></svg></button><button aria-label="Matriz"><svg class="i16"><use href="#array"/></svg></button><button aria-label="Escala"><svg class="i16"><use href="#scale"/></svg></button><button aria-label="Fixar"><svg class="i12"><use href="#pin"/></svg></button><button aria-label="Estender"><svg class="i14"><use href="#ext"/></svg></button><button aria-label="Estender vários"><svg class="i14"><use href="#ext2"/></svg></button><button aria-label="Excluir"><svg class="i14"><use href="#del"/></svg></button></div>
    </div>
    <h2>Modificar</h2>
  </section>
  <section class="panel p-view sepr">
    <div class="tools vgrid"><button aria-label="Ocultar"><svg class="i14"><use href="#bulbg"/></svg></button><i class="car"></i><button aria-label="Deslocar"><svg class="i14"><use href="#blocksg"/></svg></button><button aria-label="Sobrepor"><svg class="i14"><use href="#brushg"/></svg></button><i class="car"></i><button aria-label="Espessura"><svg class="i16"><use href="#lines"/></svg></button><button aria-label="Caixa"><svg class="i16"><use href="#boxg"/></svg></button></div>
    <h2>Vista</h2>
  </section>
  <section class="panel p-med sepr">
    <div class="tools mgrid"><button aria-label="Medir distância"><svg class="i28"><use href="#measure"/></svg></button><i class="car"></i><button aria-label="Cota alinhada"><svg class="i28"><use href="#dimb"/></svg></button><i class="car"></i></div>
    <h2>Medir</h2>
  </section>
  <section class="panel p-cre">
    <div class="tools bg2"><button aria-label="Criar montagem"><svg class="i28"><use href="#cr1"/></svg></button><button aria-label="Criar peças"><svg class="i28"><use href="#cr2"/></svg></button><button aria-label="Criar grupo"><svg class="i28"><use href="#cr3"/></svg></button><button aria-label="Criar similar"><svg class="i28"><use href="#cr4"/></svg></button></div>
    <h2>Criar</h2>
  </section>
  <section class="panel p-rev">
    <div class="tools">
      <button class="big off"><svg class="i28"><use href="#un1"/></svg>Desocultar<br>elemento</button>
      <button class="big off"><svg class="i28"><use href="#un2"/></svg>Desocultar<br>categoria</button>
      <i class="vline"></i>
      <button class="big wide"><svg class="i28"><use href="#bigx"/></svg>Alternar o modo revelar<br>elementos ocultos</button>
    </div>
    <h2 class="hl">Revelar elementos ocultos</h2>
  </section>
</div>
<div class="optbar"><i></i><i></i></div>

<main>
  <aside class="props">
    <div class="ptitle"><h2>Propriedades</h2><button aria-label="Fechar propriedades"><svg class="i14"><use href="#x"/></svg></button></div>
    <div class="ptype"><div class="thumb"><svg class="i28"><use href="#plan"/></svg></div><span>Planta de piso</span><i class="car dk"></i></div>
    <div class="pinst"><div class="sel-box"><select aria-label="Instância"><option>Planta de piso: Nível</option></select><svg class="i12"><use href="#down"/></svg></div><button><svg class="i14"><use href="#edt"/></svg>Editar tipo</button></div>
    <div class="pbody">
      <table>
        <colgroup><col class="c1"><col class="c2"><col></colgroup>
        <tr><td>Disciplina</td><td>Arquitetura</td><td></td></tr>
        <tr><td>Mostrar linhas...</td><td>Por disciplina</td><td></td></tr>
        <tr><td>Localização d...</td><td>Plano de fundo</td><td></td></tr>
        <tr><td>Esquema de cor</td><td><button>&lt;nenhum&gt;</button></td><td></td></tr>
        <tr><td>Esquemas de ...</td><td><button>Editar...</button></td><td></td></tr>
        <tr><td>Estilo de exibi...</td><td>Nenhum</td><td></td></tr>
        <tr><td><label for="k1c">Caminho do sol</label></td><td><input type="checkbox" id="k1c"></td><td></td></tr>
        <tr class="grp"><th colspan="3">Subjacência<svg class="i12"><use href="#dbl"/></svg></th></tr>
        <tr><td>Faixa: Nível ba...</td><td>Nenhum</td><td></td></tr>
        <tr class="dis"><td>Faixa: Nível su...</td><td>Não delimitado</td><td></td></tr>
        <tr class="dis"><td>Orientação da...</td><td>Olhar para baixo</td><td></td></tr>
        <tr class="grp"><th colspan="3">Extensões<svg class="i12"><use href="#dbl"/></svg></th></tr>
        <tr><td><label for="k2c">Recortar vista</label></td><td><input type="checkbox" id="k2c"></td><td></td></tr>
        <tr><td><label for="k3c">Região de rec...</label></td><td><input type="checkbox" id="k3c"></td><td></td></tr>
        <tr><td><label for="k4c">Recorte de an...</label></td><td><input type="checkbox" id="k4c"></td><td></td></tr>
        <tr><td>Faixa da vista</td><td><button>Editar...</button></td><td></td></tr>
        <tr class="dis"><td>Nível associado</td><td>Nível 1</td><td></td></tr>
        <tr><td>Caixa de esco...</td><td>Nenhum</td><td></td></tr>
        <tr><td>Recorte de pr...</td><td><button>Sem recorte</button></td><td></td></tr>
        <tr class="grp"><th colspan="3">Dados de identidade<svg class="i12"><use href="#dbl"/></svg></th></tr>
        <tr><td>Modelo de vis...</td><td><button>&lt;Nenhum&gt;</button></td><td></td></tr>
        <tr><td>Nome da vista</td><td>Nível 1</td><td></td></tr>
        <tr class="dis"><td>Dependência</td><td>Independente</td><td></td></tr>
        <tr><td>Título da pági...</td><td></td><td></td></tr>
        <tr class="dis"><td>Folha de refer...</td><td></td><td></td></tr>
      </table>
      <div class="vscroll"><svg class="i12"><use href="#up"/></svg><div class="track"><div class="thumb1"></div></div><svg class="i12"><use href="#down"/></svg></div>
    </div>
    <div class="pfoot"><a href="#ajuda">Ajuda de propriedades</a><button disabled>Aplicar</button></div>
  </aside>

  <section class="view view1">
    <div class="vtabs">
      <button class="act"><svg class="i14"><use href="#plan"/></svg><b>Nível 1</b><svg class="i14 cl"><use href="#x"/></svg></button>
      <button class="t2"><svg class="i14 fade"><use href="#sect"/></svg>Corte 1</button>
      <button class="t3"><svg class="i14 fade"><use href="#callout"/></svg>Detalhe 2</button>
      <i class="car bar"></i>
    </div>
    <div class="vmid">
      <div class="canvas hot">
        <svg class="draw" viewBox="189 166 478 481" role="img" aria-label="Planta do pavimento">
          <g fill="none" stroke="#bcbcbc">
            <path d="M354.500 243v317.500h167V243M356.500 244v316M519.500 244v316M354 307.500h167M356 317.500h163"/>
            <path d="M355 243.500h166" stroke="#e4e4e4" stroke-width="3"/>
            <path d="M373 318v229M503 318v42" stroke="#b0b0b0" stroke-width="2"/>
            <path d="M373 360v145M503 360v65" stroke="#a4a4a4" stroke-width="2"/>
            <path d="M503 425v134M373 359.500h113M373 361.500h130"/>
            <path d="M485.500 361v-19.500h18M487.500 361v-17.500h15M490 343v8q5-1 6-8"/>
            <path d="M400 361h7M413 361h8" stroke="#999"/>
            <path d="M373 319h3v2h-3zM427 318h4v3h-4zM500 318h4v3h-4z"/>
            <path d="M373 403.500h56.500M373 405.500h54.500v43h-54M429.500 404v129M427.500 449v111M373 450.500h55"/>
            <path d="M407 405q1 9 10 9.500v-9M385 448q1-7 7-7v8M373 478h55M373 479.500h55M409.500 451v54M411.500 451v54M412 459q8 0 9-8M412 452v8M375 488v-8h9q-1 8-9 8M411 488q8 0 8-7M356 505.500h72M356 506.500h72M360 505q1-9 8-10v10"/>
            <path d="M434.500 207v428M313 500.500h236" stroke="#a9a9a9"/>
            <path d="M436 462.500h93" stroke="#dfe2e8" stroke-width="2"/>
            <path d="M435 450v24M432 466l3-8 2 8" stroke="#ccd5e2"/>
            <path d="M310 496h4M313.500 490v15M525.500 458v10M525 475q3-8 5-9h-4M547 492v8l3-4z" stroke="#c6c6ce"/>
            <path d="M429 539.500h27M429 541.500h27M431 538v-11q7 2 10 9 3-8 10-10v12M454.500 517v43M456.500 517v41h47"/>
            <path d="M456 517.500h47" stroke="#e0e0e0" stroke-width="3"/>
            <path d="M468 498v18" stroke="#dedede" stroke-width="3"/>
            <path d="M468 507q8 1 9 9h-9M456 528q9-1 10-9M456.500 517v11M459.500 559.500h38v3h-38zM462 561h34"/>
            <path d="M435 634h10" stroke="#ddd" stroke-width="3"/>
            <g stroke="#999"><path d="M453.500 472.500h17l4 10v3h-21zM456.500 472v13M459.500 472v13M462.500 472v13M465.500 472v13M468.500 472v13M454 485.500h26"/><path d="M471 472.500h23.500v25.500H453.500v-12M456.500 487v11M459.500 487v11M462.500 487v11M465.500 487v11M468.500 487v11M471.500 474v24M474.500 474v24M477.500 474v24M480.500 474v24M454 498h41" stroke-dasharray="2 2"/></g>
            <path d="M441 479h11" stroke-dasharray="2 1"/>
            <circle cx="426" cy="177" r="7.500" stroke="#999"/><path d="M422 184l4 3 4-3" stroke="#999"/>
            <g stroke="#9aa8cf"><circle cx="434.500" cy="199.500" r="7"/><path d="M427 199.500h17M434.500 190v3M440 194l4 5-9 8"/></g>
            <circle cx="642.500" cy="378" r="7.500" stroke="#999"/><path d="M636 373l-5 5 5 5" stroke="#999"/>
          </g>
          <g fill="none" stroke="#c9086f" stroke-width="2"><circle cx="193" cy="392" r="5"/><path d="M189 386h5l6 5-5 6-6 1M191 388l4 8M196 388l-5 8M199 387v9"/></g>
          <path d="M191.500 386v-26M200 392h20" stroke="#222"/><path d="M189 366l2.500-13 3.500 13zM217 389l13 3-13 3z" fill="#900350"/>
          <path d="M571 352v11l3-2 2 4 1.500-.7-2-4h4z" fill="#fff" stroke="#222"/>
        </svg>
        <div class="flag">Revelar elementos ocultos</div>
        <div class="navbar n1"><svg class="i8"><use href="#ring"/></svg><button aria-label="Roda de navegação"><svg class="i16"><use href="#wheel"/></svg><sub>2D</sub></button><i class="car"></i><hr><button aria-label="Zoom"><svg class="i14"><use href="#zoomr"/></svg></button><i class="car"></i><svg class="i8"><use href="#ring"/></svg></div>
      </div>
      <div class="vscroll mid"><svg class="i12"><use href="#up"/></svg><div class="track"><div class="thumb2"></div></div><svg class="i12"><use href="#down"/></svg></div>
    </div>
    <div class="vbar"><span>1 : 100</span>
      <svg><use href="#v1"/></svg><svg><use href="#v2"/></svg><svg><use href="#sun"/></svg><svg><use href="#shadow"/></svg><svg><use href="#crop"/></svg><svg><use href="#crop2"/></svg><svg><use href="#glasses"/></svg><svg><use href="#reveal"/></svg><svg><use href="#temp"/></svg><svg><use href="#anal"/></svg><svg><use href="#constr"/></svg>
      <div class="hscroll"><svg class="i12"><use href="#left"/></svg><div class="htrack"><div></div></div><svg class="i12"><use href="#right"/></svg></div><i class="grip"></i>
    </div>
  </section>

  <section class="view view2">
    <div class="vtabs">
      <button class="t3d"><svg class="i14 fade"><use href="#house"/></svg>{3D}</button>
      <i class="car bar"></i>
    </div>
    <div class="vmid">
      <div class="canvas">
        <svg class="draw" viewBox="689 163 303 487" role="img" aria-label="Modelo 3D do sobrado">
          <g transform="translate(690 290) scale(.33333)" stroke="#111" stroke-width="3" stroke-linejoin="round">
            <path d="M32 455L85 402 150 360 270 280 820 330 867 375 765 470 383 683 268 633 115 530z" fill="#6b5046" stroke-width="2"/>
            <path d="M152 408L275 332 300 345 740 350 740 375 365 575z" fill="#777"/>
            <path d="M250 380L290 350 480 430 520 470 440 525z" fill="#a9a9ae" stroke-width="2"/>
            <path d="M187 427L248 390 430 532 365 573z" fill="#74b04b"/>
            <path d="M152 408L365 575V608L152 441z" fill="#38383a"/>
            <path d="M365 575L740 350V376L365 608z" fill="#69696b"/>
            <path d="M740 315L820 278V328L740 374z" fill="#2c5a82"/>
            <path d="M778 235l18 2v28l-14 8z" fill="#222"/>
            <path d="M474 398L780 208V295L740 318V352L450 518V465L474 452z" fill="#2a5780"/>
            <path d="M280 285L378 348 404 345 474 395V460L378 415 378 375 280 355z" fill="#1b3650"/>
            <path d="M404 350L474 398V468L404 428z" fill="#24486c"/>
            <path d="M415 378l48 30v48l-48-28z" fill="#d8d8d8" stroke-width="2"/>
            <path d="M425 383v50M436 390v50M447 397v50" stroke-width="5"/>
            <path d="M384 405L462 452V470L384 425z" fill="#b3b3b5" stroke-width="2"/><path d="M395 410v20M410 419v20M425 428v20M440 437v20M455 446v20"/>
            <path d="M290 350v50M378 410v60M446 458v62" stroke="#152d46" stroke-width="7"/><path d="M282 350v38l14 8v-38z" fill="#2a5a88"/>
            <path d="M286 316l34 22v16l-34-20zM352 362l20 10v28l-20-10z" fill="#090e13"/>
            <path d="M448 498L510 464 480 460 510 440V420M474 440V400M474 400L780 215M510 425L740 290" fill="none" stroke-width="2"/>
            <path d="M520 440l45-24v22l-45 24zM592 392l45-24v22l-45 28zM642 372l36-24v32l-36 22zM693 336l40-24v22l-40 22zM553 374l38-20v20l-38 20zM612 338l22-14v20l-22 12zM656 310l22-12v20l-22 12zM683 292l33-16v20l-33 20z" fill="#070b11"/>
            <path d="M652 366v28M662 360v28M671 356v28M532 436v16M544 430v16M604 388v18M618 380v18M565 370v16M577 362v16" stroke="#8ba4ba" stroke-width="2"/>
            <path d="M270 275L630 48 742 134 722 146 795 203 474 396 404 345 378 357z" fill="#fff"/>
            <path d="M285 277L630 60 630 82 300 290z" fill="#707070"/>
            <path d="M630 62L728 134 712 146 630 88z" fill="#4b4d4d"/>
            <path d="M300 290L630 82 718 140 706 148 782 203 474 384 404 333 378 345z" fill="#2a2f2d" stroke-width="2"/>
            <path d="M342 272L408 320M370 254L440 298M398 238L420 252M512 155L580 212M540 140L610 220M568 120L634 188M596 104L662 182M624 86L700 140M420 290L480 338M445 285L510 320M550 225L612 275M575 215L636 254M600 200L660 238M630 175L684 212M655 160L706 190M545 265L565 300M520 285L545 310" fill="none" stroke="#070909"/>
            <path d="M380 320L450 285M540 235L565 218 600 205 655 162 718 140" fill="none" stroke-width="2"/>
            <path d="M432 225L488 262V295L432 258zM488 262L534 235V268L488 295z" fill="#2a5d8e"/>
            <path d="M420 218L480 180 546 232 485 270z" fill="#fff"/>
            <path d="M436 219L480 192 530 232 486 258z" fill="#747474"/><path d="M480 192L530 232 486 258 477 247z" fill="#262626" stroke-width="1"/>
          </g>
          <g fill="none" stroke="#c4c4c4"><ellipse cx="953.500" cy="211.500" rx="27" ry="20.500" fill="#f0f0f0"/><ellipse cx="953.500" cy="211" rx="21" ry="15" fill="#fff"/><path d="M938 194l16-9 15 9-1 17-15 9-14-10z" fill="#ececec" stroke="#aaa"/><path d="M938 194l15 10 16-10M953 204v16" stroke="#aaa"/><path d="M947 189l15 9M940 202l11 7M956 210l11-7" stroke="#999" stroke-width="2" stroke-dasharray="2 1"/><path d="M932 222l3-4 3 3M968 223l2-3 5 2" stroke="#aaa"/></g>
        </svg>
        <div class="navbar n2"><svg class="i8"><use href="#ring"/></svg><button aria-label="Roda de navegação 3D"><svg class="i16"><use href="#wheel"/></svg></button><i class="car"></i><hr><button aria-label="Zoom 3D"><svg class="i14"><use href="#zoomr"/></svg></button><i class="car"></i><svg class="i8"><use href="#ring"/></svg></div>
      </div>
      <div class="vscroll mid"><svg class="i12"><use href="#up"/></svg><div class="track"><div class="thumb2"></div></div><svg class="i12"><use href="#down"/></svg></div>
    </div>
    <div class="vbar"><span>1 : 100</span>
      <svg><use href="#v1"/></svg><svg><use href="#v2b"/></svg><svg><use href="#sun"/></svg><svg><use href="#shadow"/></svg><svg><use href="#teapot"/></svg><svg><use href="#crop"/></svg><svg><use href="#crop2"/></svg><svg><use href="#lock"/></svg><svg><use href="#glasses"/></svg><svg><use href="#bulb"/></svg><svg><use href="#temp"/></svg><svg><use href="#anal2"/></svg><svg><use href="#cubes"/></svg><svg><use href="#constr"/></svg>
      <div class="hscroll tiny"><svg class="i6"><use href="#left"/></svg><svg class="i6"><use href="#right"/></svg></div><i class="grip"></i>
    </div>
  </section>

  <aside class="browser">
    <div class="ptitle"><h2>Navegador de projeto - Projeto do Sobrado</h2><button aria-label="Fechar navegador"><svg class="i14"><use href="#x"/></svg></button></div>
    <div class="bbody">
      <ul class="tree">
        <li class="a"><i class="bx m"></i><i class="h"></i><svg class="i14"><use href="#frame"/></svg><span>Vistas (todas)</span></li>
        <li class="b"><i class="bx p"></i><i class="h"></i><span>Plantas estruturais</span></li>
        <li class="b"><i class="bx m lt"></i><i class="h"></i><span>Plantas de piso</span></li>
        <li class="c"><i class="h"></i><span>Cx D´água</span></li>
        <li class="c"><i class="h"></i><span class="cursel">Nível 1</span></li>
        <li class="c"><i class="h"></i><span>Nível 2</span></li>
        <li class="c"><i class="h"></i><span>Nível 3</span></li>
        <li class="c"><i class="h"></i><span>Platibanda</span></li>
        <li class="c last"><i class="h"></i><span>Terreno</span></li>
        <li class="b"><i class="bx p"></i><i class="h"></i><span>Plantas de forro</span></li>
        <li class="b"><i class="bx p"></i><i class="h"></i><span>Vistas 3D</span></li>
        <li class="b"><i class="bx m lt"></i><i class="h"></i><span>Elevações (Elevação da construção)</span></li>
        <li class="c"><i class="h"></i><span>Leste</span></li>
        <li class="c"><i class="h"></i><span>Norte</span></li>
        <li class="c"><i class="h"></i><span>Oeste</span></li>
        <li class="c last"><i class="h"></i><span>Sul</span></li>
        <li class="b"><i class="bx p"></i><i class="h"></i><span>Cortes (Corte da construção)</span></li>
        <li class="b"><i class="bx m lt"></i><i class="h"></i><span>Vistas de detalhe (Detalhe)</span></li>
        <li class="c only"><i class="h"></i><span>Detalhe 0</span></li>
        <li class="c only"><i class="h"></i><span>Detalhe 1</span></li>
        <li class="c only last"><i class="h"></i><span>Detalhe 2</span></li>
        <li class="a"><i class="nb"></i><i class="h"></i><svg class="i14"><use href="#leg"/></svg><span>Legendas</span></li>
        <li class="a"><i class="bx m"></i><i class="h"></i><svg class="i14"><use href="#tab"/></svg><span>Tabelas/Quantidades (todas)</span></li>
        <li class="d"><i class="h"></i><span>MATERIAIS - PILAR ESTRUTURAL</span></li>
        <li class="d"><i class="h"></i><span>MATERIAIS - VERGALHÕES</span></li>
        <li class="d"><i class="h"></i><span>MATERIAIS DE PAREDE</span></li>
        <li class="d"><i class="h"></i><span>MATERIAL - FORRO</span></li>
        <li class="d"><i class="h"></i><span>MATERIAL - FUNDAÇÃO ESTRUTURAL</span></li>
        <li class="d"><i class="h"></i><span>MATERIAL - JANELAS</span></li>
        <li class="d"><i class="h"></i><span>MATERIAL - PISO</span></li>
        <li class="d"><i class="h"></i><span>MATERIAL - PORTAS</span></li>
        <li class="d"><i class="h"></i><span>MATERIAL - VIGA ESTRUTURAL</span></li>
        <li class="a"><i class="nb"></i><i class="h"></i><svg class="i14"><use href="#sheet"/></svg><span>Folhas (todas)</span></li>
        <li class="a"><i class="bx p"></i><i class="h"></i><svg class="i14"><use href="#fam"/></svg><span>Famílias</span></li>
      </ul>
      <div class="vscroll"><svg class="i12"><use href="#up"/></svg><div class="track"><div class="thumb3"></div></div><svg class="i12"><use href="#down"/></svg></div>
    </div>
  </aside>
</main>

<footer class="status">
  <p>Clique para selecionar, TAB para alternativas, CTRL adiciona, SHIFT cancela a seleção.</p>
  <svg class="i14"><use href="#s1"/></svg>
  <div class="sel-box ws"><select aria-label="Conjunto de trabalho"><option></option></select><svg class="i12"><use href="#down"/></svg></div>
  <svg class="i14"><use href="#s2"/></svg><span class="zero">:0</span>
  <svg class="i14"><use href="#s3"/></svg><svg class="i14 s4"><use href="#s4"/></svg>
  <div class="sel-box opt"><select aria-label="Opção de projeto"><option>Modelo principal</option></select><svg class="i12"><use href="#down"/></svg></div>
  <div class="sright"><svg class="i14"><use href="#k1"/></svg><svg class="i14"><use href="#k2"/></svg><svg class="i14"><use href="#k3"/></svg><svg class="i14"><use href="#k4"/></svg><svg class="i14"><use href="#k5"/></svg><svg class="i14"><use href="#k6"/></svg><svg class="i14"><use href="#k7"/></svg></div><span>:0</span>
</footer>

<div class="taskbar">
  <div class="apps">
    <button aria-label="Iniciar"><svg class="i16"><use href="#win"/></svg></button><button aria-label="Pesquisar no Windows"><svg class="i16"><use href="#search"/></svg></button><button aria-label="Visão de tarefas"><svg class="i16"><use href="#taskv"/></svg></button><button class="run" aria-label="Explorador"><svg class="i20"><use href="#files"/></svg></button><button class="run" aria-label="Chrome"><svg class="i20"><use href="#chrome"/></svg></button><button aria-label="Uninstaller"><svg class="i20"><use href="#uni"/></svg></button><button class="actv" aria-label="Revit 2021"><svg class="i20 rv"><use href="#revit"/></svg></button><button aria-label="CorelDRAW"><svg class="i20"><use href="#corel"/></svg></button><button aria-label="Acrobat"><svg class="i20"><use href="#acro"/></svg></button><button class="run" aria-label="OBS"><svg class="i20"><use href="#obs"/></svg></button>
  </div>
  <div class="tray">
    <svg class="i16 wh"><use href="#trayup"/></svg><svg class="i14"><use href="#mic"/></svg><svg class="i14"><use href="#tr1"/></svg><svg class="i14"><use href="#shield"/></svg><svg class="i14"><use href="#wifi"/></svg><svg class="i14"><use href="#batt"/></svg><svg class="i14"><use href="#vol"/></svg><svg class="kb"><use href="#kbd"/></svg>
    <div class="lang">POR<br>PTB2</div><time>16:13<br>12/11/2020</time>
    <button aria-label="Notificações"><svg class="i16"><use href="#note"/></svg></button>
  </div>
</div>
</body>
</html>
```
FILE: styles.css
```css
* { box-sizing: border-box; }
body { margin: 0; height: 100vh; display: flex; flex-direction: column; overflow: hidden; background: #e6e6e6; color: #333; font: 10px/14px Roboto, "Noto Sans", sans-serif; }
button, select, input { font: inherit; color: inherit; }
button { padding: 0; border: 0; background: none; display: flex; align-items: center; justify-content: center; white-space: nowrap; }
h1, h2, p, ul { margin: 0; padding: 0; font-size: inherit; font-weight: normal; }
svg { flex: none; display: block; }
.defs { position: absolute; width: 0; height: 0; }
.i6 { width: 6px; height: 8px; } .i8 { width: 8px; height: 8px; } .i12 { width: 12px; height: 12px; } .i14 { width: 14px; height: 14px; }
.i16 { width: 16px; height: 16px; } .i20 { width: 20px; height: 20px; } .i26 { width: 26px; height: 26px; } .i28 { width: 28px; height: 28px; }
.dk { color: #555; }
.flip { transform: scaleX(-1); color: #aaa; }
.fade { opacity: .6; }
.car { width: 10px; flex: none; display: flex; justify-content: center; align-items: center; }
.car::after { content: ""; border: 2px solid transparent; border-top: 3px solid #444; border-bottom: 0; }
.car.dk::after { border-width: 3px 3px 0; }
.car.bar { flex-direction: column; gap: 1px; }
.car.bar::before { content: ""; width: 8px; height: 1px; background: #333; }
.car.bar::after { border-width: 4px 4px 0; border-top-color: #333; }

.titlebar { height: 24px; flex: none; display: flex; align-items: center; background: #cbcbcb; }
.qat { display: flex; align-items: center; width: 561px; padding-left: 1px; }
.qat button { width: 20px; height: 20px; }
.qat .on { background: #c5e1f5; border: 1px solid #3d83b5; }
.gap3 { width: 3px; } .gap5 { width: 5px; } .gap7 { width: 7px; }
.titlebar h1 { flex: 1; white-space: nowrap; padding-bottom: 6px; }
.account { display: flex; align-items: center; margin-right: 50px; }
.carl { border: 3px solid transparent; border-right-color: #333; border-left: 0; margin-right: 6px; }
.account button { height: 20px; min-width: 20px; }
.account .login { gap: 6px; margin-right: 10px; }
.account .shop { margin-left: 2px; }
.account .helpb { border-left: 1px solid #b5b5b5; padding-left: 6px; margin-left: 4px; }
.winbtns { display: flex; gap: 7px; padding-right: 4px; color: #222; }

.tabs { height: 17px; flex: none; display: flex; background: #cbcbcb; padding-left: 1px; }
.tabs button { padding: 0 8px; }
.tabs .file { background: #2b7bae; color: #fff; width: 49px; margin-right: 1px; }
.tabs .sel { background: #ececec; }
.tabs .mini { padding: 0 0 0 18px; }
.mini span { width: 13px; height: 7px; border: 1px solid #555; border-radius: 2px; background: linear-gradient(#555, #555) center/4px 2px no-repeat #eee; }

.ribbon { height: 80px; flex: none; display: flex; background: #ececec; }
.panel { flex: none; display: flex; flex-direction: column; position: relative; }
.panel h2 { height: 15px; display: flex; align-items: center; justify-content: center; white-space: nowrap; }
.panel .hl { background: #fcf3df; }
.tools { height: 65px; display: flex; padding: 2px 0; }
.sepr { border-right: 1px solid #dcdcdc; } .sepl { border-left: 1px solid #dcdcdc; }
.p-sel { width: 67px; } .p-prop { width: 67px; } .p-geo { width: 120px; } .p-clip { width: 103px; } .p-mod { width: 199px; }
.p-view { width: 54px; } .p-med { width: 47px; } .p-cre { width: 70px; } .p-rev { width: 225px; }
.mod { flex-direction: column; justify-content: flex-start; width: 48px; height: 59px; margin: 1px 0 0 10px; background: #b3d4ef; border: 1px solid #3b81bd; gap: 7px; padding-top: 5px; }
.cur { width: 12px; height: 18px; }
.p-prop .tools { flex-direction: column; align-items: center; gap: 2px; }
.p-prop .on { width: 32px; height: 28px; background: #b8d9f0; border: 1px solid #3b81bd; }
.rows { width: 65px; display: grid; grid-template-rows: repeat(3, 21px); padding-left: 5px; }
.rows button { justify-content: flex-start; gap: 2px; }
.rows .car { margin-left: 3px; }
.sm2 { display: grid; grid-template: repeat(3, 21px) / 21px 21px; }
.sm1 { display: grid; grid-template-rows: repeat(3, 21px); width: 20px; }
.sm3 { display: grid; grid-template: repeat(3, 21px) / repeat(3, 21px); }
.bg4 { display: grid; grid-template: repeat(2, 30px) / repeat(4, 33px); padding-left: 1px; }
.big { flex-direction: column; justify-content: flex-start; width: 52px; line-height: 13px; }
.big svg { height: 33px; }
.off { color: #a8a8a8; }
.p-clip .big { width: 40px; margin-left: 20px; }
.vgrid { display: grid; grid-template: repeat(3, 21px) / 20px 10px 22px; padding-left: 1px; }
.mgrid { display: grid; grid-template: repeat(2, 30px) / 34px 10px; }
.bg2 { display: grid; grid-template: repeat(2, 30px) / 34px 32px; }
.vline { width: 1px; background: #cfcfcf; margin: 0 3px; }
.wide { width: 114px; }

.optbar { height: 24px; flex: none; display: flex; gap: 6px; padding-left: 16px; background: #fcf3df; border-top: 1px solid #c9c9c9; border-bottom: 1px solid #c4c4c4; }
.optbar i { width: 5px; background: #eeeae2; } .optbar i + i { width: 12px; }

main { flex: 1; min-height: 0; display: flex; gap: 2px; background: #f2f2f2; }
.props { width: 184px; flex: none; display: flex; flex-direction: column; background: #f0f0f0; border-left: 1px solid #e0e0e0; }
.ptitle { height: 17px; flex: none; display: flex; align-items: center; justify-content: space-between; padding: 0 2px; background: #ededed; color: #444; }
.ptitle button { color: #222; }
.props .ptitle { padding-right: 3px; }
.ptype { height: 60px; flex: none; display: flex; align-items: center; padding: 0 2px 3px 3px; border-top: 1px solid #ddd; }
.ptype .thumb { width: 55px; height: 55px; border: 1px solid #ccc; display: flex; align-items: center; justify-content: center; margin-right: 3px; }
.ptype .car { margin-left: auto; }
.pinst { height: 17px; flex: none; display: flex; gap: 4px; }
.sel-box { display: grid; align-items: center; background: #fff; border: 1px solid #e0e0e0; color: #888; }
.sel-box select, .sel-box svg { grid-area: 1 / 1; }
.sel-box select { appearance: none; border: 0; background: none; padding: 0 0 0 2px; margin: 0; width: 100%; line-height: 13px; height: 13px; outline: 0; }
.sel-box svg { justify-self: end; pointer-events: none; }
.pinst .sel-box { width: 110px; background: #e4e4e4; border-color: #ccc; color: #333; }
.pinst button { gap: 2px; }
.pbody { flex: 1; min-height: 0; display: flex; background: #fff; overflow: hidden; }
.props table { width: 167px; table-layout: fixed; border-collapse: collapse; align-self: flex-start; color: #222; }
.c1 { width: 78px; } .c2 { width: 78px; }
.props td, .props th { height: 16px; padding: 0 0 0 7px; line-height: 14px; border-bottom: 1px dashed #b5b5b5; border-right: 1px dashed #c5c5c5; white-space: nowrap; }
.props td + td { padding: 0 0 0 1px; }
.props th { background: #dcdcdc; text-align: left; font-weight: normal; padding-left: 2px; border: 0; }
.props th svg { float: right; }
.props td button { width: 76px; height: 14px; background: #dfdfdf; border: 1px solid #bbb; border-right-color: #888; border-bottom-color: #888; }
.props td input { appearance: none; width: 11px; height: 11px; margin: 1px 0 0; border: 1px solid #333; background: #fff; display: block; }
.dis { color: #8c8c8c; }
.vscroll { width: 14px; flex: none; background: #f0f0f0; display: flex; flex-direction: column; align-items: center; padding: 2px 0; color: #333; }
.props .vscroll { margin-left: auto; margin-right: 2px; }
.track { flex: 1; width: 13px; display: flex; flex-direction: column; }
.thumb1 { margin-top: auto; height: 65%; margin-bottom: 38px; background: #cdcdcd; }
.thumb2 { margin: auto; width: 13px; height: 14px; background: #cdcdcd; }
.thumb3 { height: 95%; background: #cdcdcd; }
.pfoot { height: 26px; flex: none; display: flex; justify-content: space-between; align-items: center; padding: 0 4px 2px 2px; }
.pfoot a { color: #2468b2; }
.pfoot button { width: 57px; height: 17px; background: #ccc; border: 1px solid #bcbcbc; color: #8c8c8c; }

.view { flex: 500 1 0; min-width: 0; display: flex; flex-direction: column; background: #fff; }
.view2 { flex-grow: 320; }
.vtabs { height: 18px; flex: none; display: flex; background: #cacaca; }
.vtabs button { gap: 5px; justify-content: flex-start; padding-left: 3px; }
.vtabs .act { width: 106px; background: #fff; color: #222; }
.vtabs .cl { margin-left: auto; margin-right: 2px; }
.vtabs .t2 { width: 107px; gap: 6px; } .vtabs .t3 { gap: 6px; }
.vtabs .t3d { width: 107px; background: #ececec; }
.vtabs > .bar { margin: 0 3px 0 auto; }
.vmid { flex: 1; min-height: 0; display: flex; }
.canvas { flex: 1; min-width: 0; position: relative; background: #fff; }
.hot { border: 3px solid #b4006c; }
.draw { width: 100%; height: 100%; }
.flag { position: absolute; left: 0; top: 0; background: #c4006f; color: #3a0020; font: bold 10px/13px Roboto, sans-serif; padding-right: 2px; }
.vscroll.mid { width: 16px; }
.navbar { position: absolute; right: 0; width: 22px; height: 77px; border: 1px solid #b9b9b9; border-radius: 3px; background: #f4f4f4; display: flex; flex-direction: column; align-items: center; justify-content: space-between; }
.navbar .i8 { align-self: flex-end; }
.navbar hr { width: 16px; margin: 0; border: 0; border-top: 1px solid #ccc; }
.navbar sub { position: absolute; right: 0; top: 21px; font-size: 8px; line-height: 8px; color: #35609a; }
.n1 { top: -1px; right: -2px; } .n2 { top: 73px; right: 1px; }
.vbar { height: 15px; flex: none; display: flex; align-items: center; background: #f3f3f3; margin-right: 2px; padding-bottom: 2px; }
.vbar span { width: 61px; padding-left: 18px; white-space: nowrap; color: #111; }
.view2 .vbar span { width: 62px; padding-left: 19px; }
.vbar > svg { width: 14px; height: 12px; margin: 0 1px; }
.vbar > svg:nth-of-type(even) { margin-right: 2px; }
.hscroll { flex: 1; display: flex; align-items: center; margin: 0 4px 0 2px; color: #333; }
.htrack { flex: 1; display: flex; } .htrack div { width: 13px; height: 13px; background: #cdcdcd; margin: auto; }
.hscroll.tiny { margin: 0; }
.grip { width: 9px; height: 9px; background: radial-gradient(#aaa 1px, transparent 1px) 0 0/3px 3px; clip-path: polygon(100% 0, 100% 100%, 0 100%); }

.browser { width: 270px; flex: none; display: flex; flex-direction: column; background: #fff; border-left: 1px solid #ddd; }
.browser .ptitle { padding-right: 0; }
.bbody { flex: 1; min-height: 0; display: flex; }
.tree { flex: 1; list-style: none; display: grid; grid-auto-rows: 1fr; padding-bottom: 5px; color: #222; }
.tree li { display: flex; align-items: center; white-space: nowrap; --v: linear-gradient(#bbb 50%, transparent 0); background: var(--v) 6px 0/1px 4px repeat-y, var(--v) 24px 0/1px 4px repeat-y; }
.tree .a { padding-left: 2px; background: var(--v) 6px 0/1px 4px repeat-y; }
.tree .b { padding-left: 20px; }
.tree .c { padding-left: 42px; background: var(--v) 6px 0/1px 4px repeat-y, var(--v) 24px 0/1px 4px repeat-y, var(--v) 41px 0/1px 4px repeat-y; }
.tree .c.only { background: var(--v) 6px 0/1px 4px repeat-y, var(--v) 41px 0/1px 4px repeat-y; }
.tree .d { padding-left: 25px; }
.tree .h { width: 6px; border-top: 1px dashed #bbb; margin-right: 3px; }
.tree .a .h { width: 4px; margin-right: 3px; }
.tree .c .h, .tree .d .h { width: 12px; margin-right: 1px; }
.tree .a span { padding-left: 2px; }
.nb { width: 9px; }
.tree .bx { width: 9px; height: 9px; border: 1px solid #9a9aa8; background: linear-gradient(#446, #446) center/5px 1px no-repeat #fff; }
.tree .p { background: linear-gradient(#446, #446) center/5px 1px no-repeat, linear-gradient(#446, #446) center/1px 5px no-repeat, #fff; }
.tree .lt { border-color: #c3c3ce; }
.tree .c span { padding: 0 2px 0 1px; }
.tree .cursel { background: #e0e0e0; font-weight: bold; }

.status { height: 22px; flex: none; display: flex; align-items: center; background: #cacaca; border-top: 2px solid #f0f0f0; color: #111; }
.status p { width: 448px; padding-left: 2px; white-space: nowrap; }
.status .sel-box { height: 15px; border-color: #fff; }
.status .ws { width: 170px; margin: 0 5px; }
.zero { width: 22px; padding-left: 2px; }
.s4 { margin: 0 5px 0 6px; }
.status .opt { width: 171px; }
.sright { display: flex; gap: 6px; margin-left: auto; }
.status > span:last-child { width: 60px; padding-left: 1px; }

.taskbar { height: 33px; flex: none; display: flex; justify-content: space-between; background: linear-gradient(90deg, #26393f, #21343f 50%, #1b2641); color: #fff; }
.apps { display: flex; }
.apps button { width: 41px; height: 33px; }
.apps button:first-child { width: 39px; }
.apps .run { background: linear-gradient(#76b9ed, #76b9ed) center bottom/34px 2px no-repeat; }
.apps .actv { background: linear-gradient(#76b9ed, #76b9ed) center bottom/41px 2px no-repeat #4b5e66; }
.rv { background: #dfe6ee; }
.tray { display: flex; align-items: center; gap: 6px; }
.wh { margin-right: -2px; }
.kb { width: 20px; height: 16px; margin: 0 2px 0 1px; }
.lang, time { text-align: center; line-height: 15px; }
.lang { width: 24px; } time { width: 56px; }
.tray button { width: 24px; margin-right: 16px; }
```
